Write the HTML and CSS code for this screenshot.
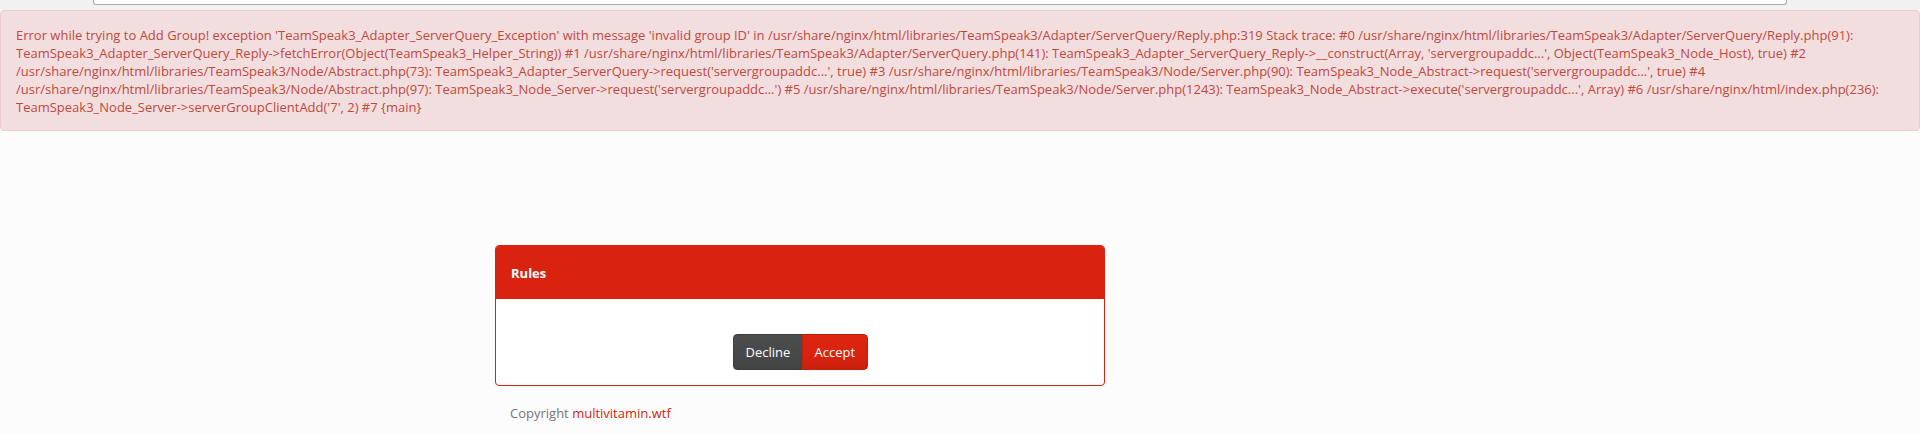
FILE: index.html
```html
<!DOCTYPE html>
<html lang="en">
<head>
<meta charset="utf-8">
<title>Rules</title>
<link rel="stylesheet" href="styles.css">
</head>
<body>
<div class="topbar"><div class="addr"></div></div>
<div class="alert">Error while trying to Add Group! exception 'TeamSpeak3_Adapter_ServerQuery_Exception' with message 'invalid group ID' in /usr/share/nginx/html/libraries/TeamSpeak3/Adapter/ServerQuery/Reply.php:319 Stack trace: #0 /usr/share/nginx/html/libraries/TeamSpeak3/Adapter/ServerQuery/Reply.php(91): TeamSpeak3_Adapter_ServerQuery_Reply-&gt;fetchError(Object(TeamSpeak3_Helper_String)) #1 /usr/share/nginx/html/libraries/TeamSpeak3/Adapter/ServerQuery.php(141): TeamSpeak3_Adapter_ServerQuery_Reply-&gt;__construct(Array, 'servergroupaddc...', Object(TeamSpeak3_Node_Host), true) #2 /usr/share/nginx/html/libraries/TeamSpeak3/Node/Abstract.php(73): TeamSpeak3_Adapter_ServerQuery-&gt;request('servergroupaddc...', true) #3 /usr/share/nginx/html/libraries/TeamSpeak3/Node/Server.php(90): TeamSpeak3_Node_Abstract-&gt;request('servergroupaddc...', true) #4 /usr/share/nginx/html/libraries/TeamSpeak3/Node/Abstract.php(97): TeamSpeak3_Node_Server-&gt;request('servergroupaddc...') #5 /usr/share/nginx/html/libraries/TeamSpeak3/Node/Server.php(1243): TeamSpeak3_Node_Abstract-&gt;execute('servergroupaddc...', Array) #6 /usr/share/nginx/html/index.php(236): TeamSpeak3_Node_Server-&gt;serverGroupClientAdd('7', 2) #7 {main}</div>
<div class="main">
  <div class="panel">
    <div class="panel-heading"><h3 class="panel-title">Rules</h3></div>
    <div class="panel-body">
      <div class="btn-group">
        <button class="btn btn-default" type="button">Decline</button>
        <button class="btn btn-primary" type="button">Accept</button>
      </div>
    </div>
  </div>
  <footer class="footer">Copyright <a href="#" class="link">multivitamin.wtf</a></footer>
</div>
</body>
</html>
```

FILE: styles.css
```css
* { box-sizing: border-box; }
html, body { margin: 0; padding: 0; }
body {
  background: #fcfcfc;
  font-family: "Open Sans", "Liberation Sans", sans-serif;
  font-size: 13px;
  line-height: 18px;
  color: #777777;
}
.topbar {
  height: 10px;
  background: #f1f1f1;
  padding-left: 93px;
}
.addr {
  width: 1694px;
  height: 5px;
  background: #ffffff;
  border: 1px solid #a8a8a8;
  border-top: none;
  border-radius: 0 0 3px 3px;
}
.alert {
  background: #f2dede;
  border: 1px solid #ebccd1;
  border-radius: 4px;
  padding: 15px 15px 14px;
  color: #c0493f;
}
.main {
  padding-top: 114px;
  padding-left: 495px;
  width: 1105px;
}
.panel {
  width: 610px;
  background: #ffffff;
  border: 1px solid #d9230f;
  border-radius: 4px;
  overflow: hidden;
}
.panel-heading {
  background: #d9230f;
  padding: 18px 15px 17px;
}
.panel-title {
  margin: 0;
  font-size: 13px;
  line-height: 18px;
  font-weight: 700;
  color: #ffffff;
}
.panel-body {
  padding: 35px 15px 15px;
  display: flex;
  justify-content: center;
}
.btn-group { display: flex; }
.btn {
  font-family: inherit;
  font-size: 13px;
  line-height: 18px;
  padding: 8px 12px;
  height: 36px;
  border: 1px solid transparent;
  color: #ffffff;
  cursor: pointer;
  margin: 0;
}
.btn-default {
  background: linear-gradient(#4b4d4d, #474949 60%, #424444);
  border-color: #3d3f3f;
  border-radius: 4px 0 0 4px;
  width: 70px;
}
.btn-primary {
  background: linear-gradient(#dd2510, #d9230f 60%, #c9200e);
  border-color: #c2200d;
  border-left-color: #c2200d;
  border-radius: 0 4px 4px 0;
  width: 66px;
  margin-left: -1px;
}
.footer {
  padding: 18px 15px 0;
  color: #777777;
}
.link {
  color: #d9230f;
  text-decoration: none;
}
```
